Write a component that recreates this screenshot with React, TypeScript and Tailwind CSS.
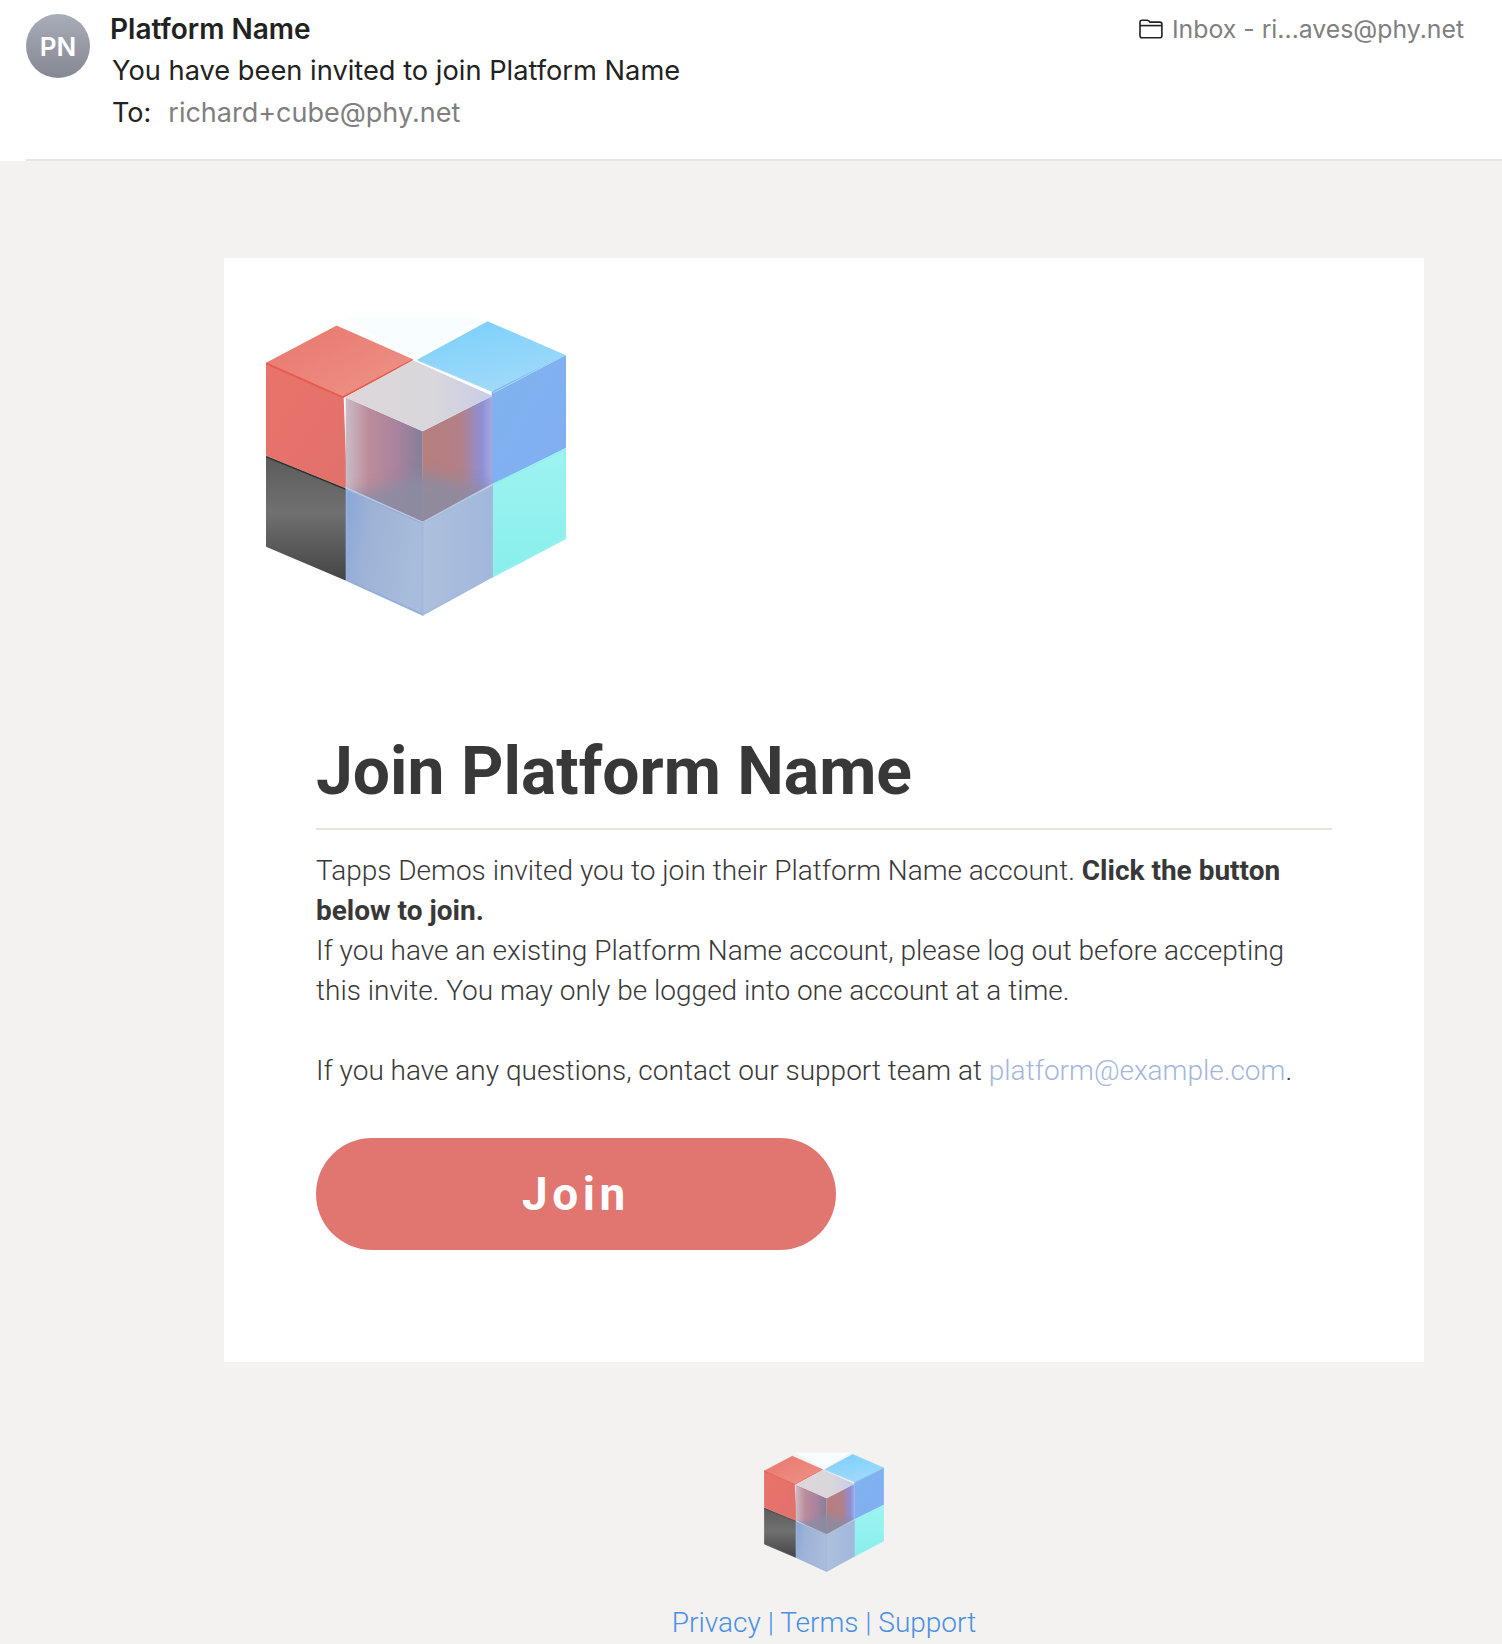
import React from 'react';

function FolderIcon({ className }: { className?: string }) {
  return (
    <svg viewBox="0 0 24 20" fill="none" stroke="currentColor" strokeWidth="1.6" className={className}>
      <path d="M1 3.2C1 2 1.8 1.2 3 1.2h5.2c.7 0 1.2.3 1.7.8l1 1.1h10c1.2 0 2 .8 2 2v11.6c0 1.2-.8 2-2 2H3c-1.2 0-2-.8-2-2V3.2z" />
      <path d="M1 6.6h22" />
    </svg>
  );
}

function CubeLogo({ id, className }: { id: string; className?: string }) {
  return (
    <svg viewBox="50 46 900 900" className={className}>
      <defs>
        <linearGradient id={`${id}-redTop`} x1="0" y1="0" x2="1" y2="1">
          <stop offset="0" stopColor="#e8766c" />
          <stop offset="1" stopColor="#ee9488" />
        </linearGradient>
        <linearGradient id={`${id}-red`} x1="0" y1="0" x2="1" y2="1">
          <stop offset="0" stopColor="#e9736a" />
          <stop offset="1" stopColor="#e1716c" />
        </linearGradient>
        <linearGradient id={`${id}-black`} x1="0" y1="0" x2="0" y2="1">
          <stop offset="0" stopColor="#5c5c5c" />
          <stop offset="0.45" stopColor="#707070" />
          <stop offset="1" stopColor="#454545" />
        </linearGradient>
        <linearGradient id={`${id}-blueTop`} x1="0.2" y1="0" x2="0.6" y2="1">
          <stop offset="0" stopColor="#7dd0fb" />
          <stop offset="1" stopColor="#a0daf9" />
        </linearGradient>
        <linearGradient id={`${id}-blue`} x1="0" y1="0" x2="1" y2="1">
          <stop offset="0" stopColor="#7fb3ee" />
          <stop offset="1" stopColor="#82aef2" />
        </linearGradient>
        <linearGradient id={`${id}-cyan`} x1="0" y1="0" x2="0" y2="1">
          <stop offset="0" stopColor="#9ef3f1" />
          <stop offset="1" stopColor="#88efec" />
        </linearGradient>
        <linearGradient id={`${id}-glassTop`} x1="0" y1="0" x2="1" y2="0">
          <stop offset="0" stopColor="#ddd7d9" />
          <stop offset="0.6" stopColor="#d9d7dc" />
          <stop offset="1" stopColor="#c8cde6" />
        </linearGradient>
        <linearGradient id={`${id}-glassL`} x1="0" y1="0" x2="1" y2="0">
          <stop offset="0" stopColor="#cbbcc8" />
          <stop offset="0.3" stopColor="#bd8c9a" />
          <stop offset="0.68" stopColor="#a8829e" />
          <stop offset="1" stopColor="#857f98" />
        </linearGradient>
        <linearGradient id={`${id}-glassR`} x1="0" y1="0" x2="1" y2="0">
          <stop offset="0" stopColor="#b77f7e" />
          <stop offset="0.55" stopColor="#b28088" />
          <stop offset="0.85" stopColor="#8d8fd6" />
          <stop offset="1" stopColor="#a8aae2" />
        </linearGradient>
        <linearGradient id={`${id}-paleL`} x1="0" y1="0" x2="1" y2="0.3">
          <stop offset="0" stopColor="#8aa6d8" />
          <stop offset="0.35" stopColor="#9db2d6" />
          <stop offset="1" stopColor="#a8bcdb" />
        </linearGradient>
        <linearGradient id={`${id}-paleR`} x1="0" y1="0" x2="1" y2="0">
          <stop offset="0" stopColor="#adc0dd" />
          <stop offset="1" stopColor="#a0b8dc" />
        </linearGradient>
        <clipPath id={`${id}-glassClip`}>
          <polygon points="288,290 490,178 730,285 730,550 520,665 288,560" />
        </clipPath>
        <filter id={`${id}-soft`} x="-20%" y="-30%" width="140%" height="160%">
          <feGaussianBlur stdDeviation="20" />
        </filter>
      </defs>
      <polygon points="280,50 700,50 505,172 490,172" fill="#f8fdff" />
      <g strokeLinejoin="round" strokeWidth="6">
        <polygon points="53,188 262,78 488,178 280,288" fill={`url(#${id}-redTop)`} stroke={`url(#${id}-redTop)`} />
        <polygon points="53,190 280,290 290,560 53,463" fill={`url(#${id}-red)`} stroke="#e6726a" />
        <polygon points="53,470 288,567 288,836 53,736" fill={`url(#${id}-black)`} stroke={`url(#${id}-black)`} />
        <polygon points="508,178 715,65 945,165 735,272" fill={`url(#${id}-blueTop)`} stroke={`url(#${id}-blueTop)`} />
        <polygon points="730,275 947,167 947,440 730,548" fill={`url(#${id}-blue)`} stroke="#80b0ef" />
        <polygon points="730,552 947,447 947,713 730,828" fill={`url(#${id}-cyan)`} stroke="#92f0ee" />
        <polygon points="292,567 520,667 520,942 292,838" fill={`url(#${id}-paleL)`} stroke="#94afdc" />
        <polygon points="520,667 728,557 728,828 520,942" fill={`url(#${id}-paleR)`} stroke="#a4bbdc" />
      </g>
      <polyline points="50,188 280,290 490,178" fill="none" stroke="#e9594e" strokeWidth="5" />
      <polyline points="50,468 288,565" fill="none" stroke="#333333" strokeWidth="5" />
      <polyline points="505,178 735,275 945,165" fill="none" stroke="#a9dcfa" strokeWidth="3" />
      {/* frosted middle cube */}
      <g clipPath={`url(#${id}-glassClip)`}>
        <polygon points="288,290 520,392 520,665 288,560" fill={`url(#${id}-glassL)`} />
        <polygon points="520,392 730,285 730,550 520,665" fill={`url(#${id}-glassR)`} />
        <polygon points="270,590 400,560 520,515 640,550 750,560 750,720 270,720" fill="#8b8ca2" opacity="0.85" filter={`url(#${id}-soft)`} />
        <line x1="520" y1="392" x2="520" y2="665" stroke="#9a8a9c" strokeWidth="2" opacity="0.7" />
        <polygon points="288,290 490,178 730,285 520,392" fill={`url(#${id}-glassTop)`} />
      </g>
      <polyline points="288,560 520,665 730,550" fill="none" stroke="#bcc6e2" strokeWidth="4" />
    </svg>
  );
}

export default function App() {
  return (
    <div className="h-[1644px] overflow-hidden bg-[#f3f2f1] font-['Roboto',sans-serif]">
      {/* Mail header */}
      <header className="bg-white pl-[26px]">
        <div className="flex h-[161px] items-start border-b-2 border-[#e6e5e3] pt-[14px]">
          <div className="flex size-16 shrink-0 items-center justify-center rounded-full bg-gradient-to-b from-[#a9adb9] to-[#858892] font-['Inter',sans-serif] text-[26px] font-semibold text-white">
            PN
          </div>
          <div className="-mt-[6px] ml-5 flex-1 font-['Inter',sans-serif] text-[27.25px] leading-[42px] text-[#222222]">
            <div className="text-[28px] font-semibold">Platform Name</div>
            <div className="pl-[2px]">You have been invited to join Platform Name</div>
            <div className="pl-[2px] text-[27px]">
              To:<span className="ml-[17px] text-[#7f7f7f]">richard+cube@phy.net</span>
            </div>
          </div>
          <div className="-mt-[6px] mr-[38px] flex items-center font-['Inter',sans-serif] text-[24.8px] leading-[42px] text-[#808080]">
            <FolderIcon className="mr-[9px] h-[20px] w-[24px] text-[#222222]" />
            Inbox - ri...aves@phy.net
          </div>
        </div>
      </header>

      {/* Message body */}
      <main className="ml-[224px] w-[1200px] pt-[97px]">
        <section className="h-[1104px] bg-white pl-[42px] pt-[58px]">
          <CubeLogo id="big" className="size-[300px]" />
          <div className="ml-[50px] mr-[92px] pt-[119px]">
            <h1 className="border-b-2 border-[#e6e5e0] pb-[19px] text-[66px] font-bold leading-[74px] text-[#383838]">
              Join Platform Name
            </h1>
            <div className="pt-[21px] text-[28px] font-light leading-[40px] text-[#383838]">
              <p>
                Tapps Demos invited you to join their Platform Name account.{' '}
                <strong className="font-bold">Click the button below to join.</strong>
              </p>
              <p>
                If you have an existing Platform Name account, please log out before accepting this invite. You may only be logged into one account at a time.
              </p>
              <p className="mt-[40px]">
                If you have any questions, contact our support team at{' '}
                <a className="text-[#a4b6dc]">platform@example.com</a>.
              </p>
            </div>
            <button className="mt-[47px] flex h-[112px] w-[520px] items-center justify-center rounded-[56px] bg-[#e1756f] text-[46px] font-bold tracking-[0.1em] text-white">
              Join
            </button>
          </div>
        </section>

        {/* Footer */}
        <footer className="flex flex-col items-center pt-[90px]">
          <CubeLogo id="small" className="size-[120px]" />
          <div className="mt-[31px] text-[28px] font-light leading-[40px] text-[#4a90e2]">
            Privacy | Terms | Support
          </div>
        </footer>
      </main>
    </div>
  );
}
